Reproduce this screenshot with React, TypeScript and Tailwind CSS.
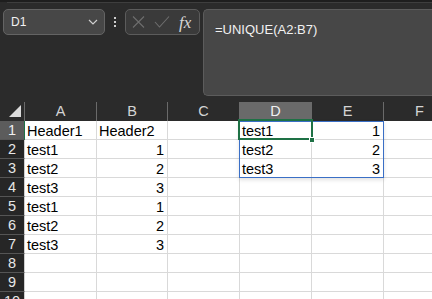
import React from "react";

// Excel (dark theme) – name box, formula bar and a small grid with a
// spilled UNIQUE() result in D1:E3.

const COLS = [
  { key: "A", w: "w-[72px]" },
  { key: "B", w: "w-[71px]" },
  { key: "C", w: "w-[72px]" },
  { key: "D", w: "w-[72px]" },
  { key: "E", w: "w-[72px]" },
  { key: "F", w: "w-[72px]" },
];

type Cell = { v: string; num?: boolean };

const DATA: Record<number, Record<string, Cell>> = {
  1: { A: { v: "Header1" }, B: { v: "Header2" }, D: { v: "test1" }, E: { v: "1", num: true } },
  2: { A: { v: "test1" }, B: { v: "1", num: true }, D: { v: "test2" }, E: { v: "2", num: true } },
  3: { A: { v: "test2" }, B: { v: "2", num: true }, D: { v: "test3" }, E: { v: "3", num: true } },
  4: { A: { v: "test3" }, B: { v: "3", num: true } },
  5: { A: { v: "test1" }, B: { v: "1", num: true } },
  6: { A: { v: "test2" }, B: { v: "2", num: true } },
  7: { A: { v: "test3" }, B: { v: "3", num: true } },
};

const ROWS = [1, 2, 3, 4, 5, 6, 7, 8, 9, 10];

function Chevron() {
  return (
    <svg width="10" height="6" viewBox="0 0 10 6" fill="none" aria-hidden="true">
      <path d="M1 1l4 4 4-4" stroke="#cfcfcf" strokeWidth="1.2" />
    </svg>
  );
}

function FormulaBar() {
  return (
    <div className="flex h-[99px] items-start pt-[6px]">
      {/* name box */}
      <div className="ml-[3px] flex h-[26px] w-[102px] items-center justify-between rounded-[5px] border border-[#646464] bg-[#474747] pl-[7px] pr-[6px]">
        <span className="text-[12px] leading-[14px] text-[#f2f2f2]">D1</span>
        <Chevron />
      </div>
      {/* splitter dots */}
      <div className="ml-[9px] mt-[8px] flex w-[3px] flex-col gap-[2px]">
        <span className="h-[2px] w-[2px] bg-[#cfcfcf]" />
        <span className="h-[2px] w-[2px] bg-[#cfcfcf]" />
        <span className="h-[2px] w-[2px] bg-[#cfcfcf]" />
      </div>
      {/* cancel / enter / fx */}
      <div className="ml-[8px] flex h-[26px] w-[75px] items-center rounded-[5px] border border-[#5c5c5c] bg-[#3a3a3a] pl-[6px]">
        <svg width="13" height="12" viewBox="0 0 13 12" aria-hidden="true">
          <path d="M1 0.5l11 11M12 0.5l-11 11" stroke="#6e6e6e" strokeWidth="1.1" />
        </svg>
        <svg className="ml-[9px]" width="16" height="12" viewBox="0 0 16 12" aria-hidden="true">
          <path d="M1 6l4.5 5L15 0.5" stroke="#6e6e6e" strokeWidth="1.1" fill="none" />
        </svg>
        <span className="ml-[9px] font-['Liberation_Serif',serif] text-[17px] italic leading-[17px] text-[#d6d6d6]">
          fx
        </span>
      </div>
      {/* formula input */}
      <div className="ml-[3px] h-[87px] flex-1 rounded-l-[5px] border border-r-0 border-[#5c5c5c] bg-[#474747] pl-[11px] pt-[7px]">
        <span className="text-[13px] leading-[15px] text-[#f2f2f2]">=UNIQUE(A2:B7)</span>
      </div>
    </div>
  );
}

function HeaderRow() {
  return (
    <div className="flex h-[19px] bg-[#2b2b2b]">
      <div className="relative w-[25px] shrink-0 border-r border-[#6a6a6a]">
        <svg className="absolute left-[9px] top-[3px]" width="12" height="12" viewBox="0 0 12 12" aria-hidden="true">
          <path d="M12 0L12 12L0 12Z" fill="#dcdcdc" />
        </svg>
      </div>
      {COLS.map((c) => (
        <div
          key={c.key}
          className={`${c.w} flex shrink-0 items-center justify-center border-r border-[#6a6a6a] text-[14.5px] leading-[15px] ${
            c.key === "D" ? "bg-[#6a6a6a] text-[#f0f0f0]" : "text-[#d4d4d4]"
          }`}
        >
          {c.key}
        </div>
      ))}
    </div>
  );
}

function GridRow({ r }: { r: number }) {
  const row = DATA[r] ?? {};
  const sel = r === 1;
  return (
    <div className="flex h-[19px]">
      <div
        className={`flex w-[25px] shrink-0 items-center justify-center border-b border-r text-[14.5px] leading-[15px] ${
          sel
            ? "border-b-[#555555] border-r-[#1e7145] bg-[#5c5c5c] text-[#f0f0f0]"
            : "border-b-[#555555] border-r-[#cfcfcf] bg-[#262626] text-[#e6e6e6]"
        }`}
      >
        {r}
      </div>
      {COLS.map((c) => {
        const cell = row[c.key];
        return (
          <div
            key={c.key}
            className={`${c.w} flex shrink-0 items-end overflow-hidden border-b border-r border-[#d9d9d9] bg-white px-[2px] text-[14.5px] leading-[15px] text-black ${
              cell?.num ? "justify-end pr-[3px]" : "justify-start"
            }`}
          >
            {cell?.v}
          </div>
        );
      })}
    </div>
  );
}

export default function App() {
  return (
    <div className="h-[299px] w-[432px] overflow-hidden bg-[#2b2b2b] font-['Liberation_Sans',Arial,sans-serif]">
      <div className="h-[2px] bg-[#1e1e1e]" />
      <div className="ml-[7px] h-px bg-[#3e3e3e]" />
      <FormulaBar />
      <HeaderRow />
      <div className="relative">
        {ROWS.map((r) => (
          <GridRow key={r} r={r} />
        ))}
        {/* spill range D1:E3 */}
        <div className="pointer-events-none absolute left-[239px] top-0 h-[57px] w-[145px] border border-[#3a6fc6] shadow-[0_2px_4px_rgba(0,0,0,0.12)]" />
        {/* active cell D1 */}
        <div className="pointer-events-none absolute left-[238px] top-[-2px] h-[21px] w-[75px] border-2 border-[#1e7145]" />
        <div className="pointer-events-none absolute left-[309px] top-[16px] h-[6px] w-[6px] border border-white bg-[#1e7145]" />
      </div>
    </div>
  );
}
